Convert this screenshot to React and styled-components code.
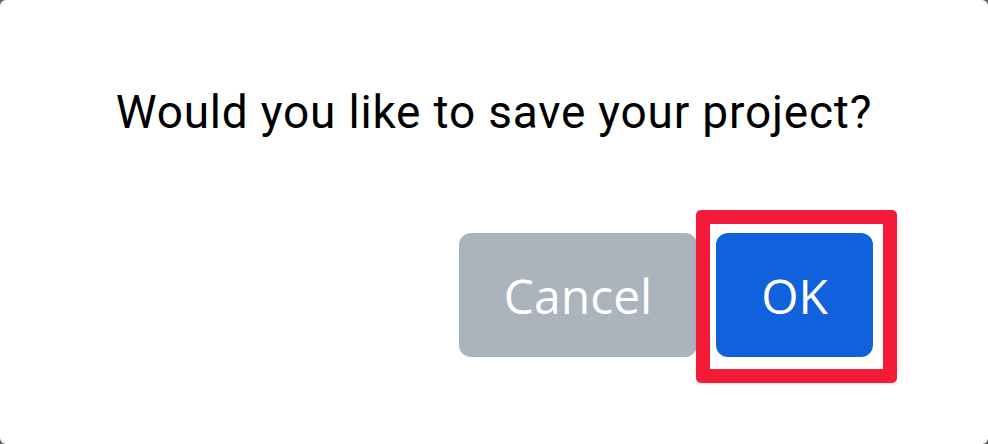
import styled, { createGlobalStyle } from 'styled-components';

const GlobalStyle = createGlobalStyle`
  html, body {
    margin: 0;
    padding: 0;
    background: #5f5f5f;
  }
`;

const Dialog = styled.div`
  box-sizing: border-box;
  width: 988px;
  height: 444px;
  background-color: #fff;
  border-radius: 6px;
  padding: 87px 115px 0 115px;
  display: flex;
  flex-direction: column;
  overflow: hidden;
`;

const Message = styled.div`
  font-family: Roboto, 'Liberation Sans', sans-serif;
  font-size: 46px;
  letter-spacing: 0.8px;
  line-height: 51px;
  color: #000;
  text-align: center;
  white-space: nowrap;
  margin: 0 -20px;
`;

const Actions = styled.div`
  display: flex;
  justify-content: flex-end;
  gap: 19px;
  margin-top: 95px;
`;

const Button = styled.button`
  position: relative;
  box-sizing: border-box;
  height: 124px;
  width: ${(p) => p.$width}px;
  border: none;
  border-radius: 12px;
  padding: 0;
  display: flex;
  align-items: center;
  justify-content: center;
  font-family: 'Open Sans', 'Noto Sans', sans-serif;
  font-size: 48px;
  color: #fff;
  background-color: ${(p) => (p.$primary ? '#1160dc' : '#abb4bc')};

  ${(p) =>
    p.$highlight &&
    `
    &::after {
      content: '';
      position: absolute;
      top: -23px;
      left: -20px;
      right: -24px;
      bottom: -26px;
      border: 14px solid #f31b37;
      border-radius: 5px;
      box-shadow: 0 1px 3px rgba(0, 0, 0, 0.12);
      pointer-events: none;
    }
  `}
`;

const App = () => {
  return (
    <>
      <GlobalStyle />
      <Dialog>
        <Message>Would you like to save your project?</Message>
        <Actions>
          <Button $width={238}>Cancel</Button>
          <Button $width={157} $primary $highlight>
            OK
          </Button>
        </Actions>
      </Dialog>
    </>
  );
};

export default App;
